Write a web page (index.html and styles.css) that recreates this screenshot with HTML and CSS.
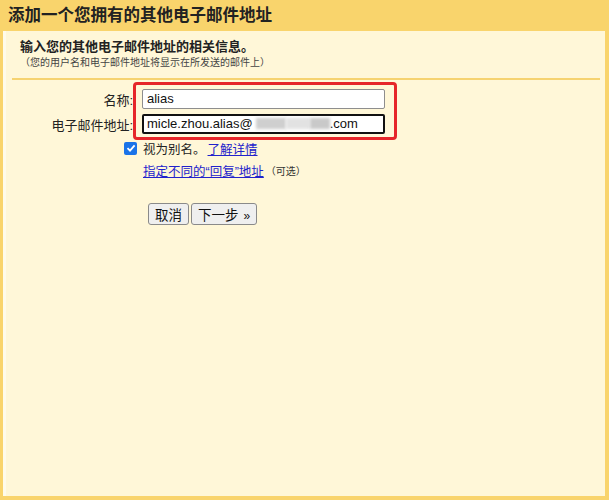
FILE: index.html
```html
<!DOCTYPE html>
<html lang="zh-CN">
<head>
<meta charset="utf-8">
<title>添加一个您拥有的其他电子邮件地址</title>
<link rel="stylesheet" href="styles.css">
</head>
<body>
<div class="header">添加一个您拥有的其他电子邮件地址</div>
<div class="panel">
  <div class="intro">
    <div class="intro-title">输入您的其他电子邮件地址的相关信息。</div>
    <div class="intro-note">（您的用户名和电子邮件地址将显示在所发送的邮件上）</div>
  </div>
  <div class="form">
    <div class="highlight"></div>
    <label class="label">名称:</label>
    <div class="field">alias</div>
    <label class="label">电子邮件地址:</label>
    <div class="field focused">micle.zhou.alias@<span class="blur b1"></span><span class="blur b2"></span><span class="blur b3"></span>.com</div>
    <div></div>
    <div class="options">
      <div class="check-row">
        <span class="checkbox"><svg width="12" height="12" viewBox="0 0 12 12"><path d="M2.5 6.2 L5 8.6 L9.6 3.4" fill="none" stroke="#fff" stroke-width="1.8"/></svg></span>
        <span>视为别名。</span><a class="link" href="#">了解详情</a>
      </div>
      <div class="reply-row"><a class="link" href="#">指定不同的“回复”地址</a><span class="optional">（可选）</span></div>
    </div>
  </div>
  <div class="buttons">
    <button class="btn">取消</button>
    <button class="btn">下一步<span class="raquo">»</span></button>
  </div>
</div>
</body>
</html>
```
FILE: styles.css
```css
* { box-sizing: border-box; }
html, body { margin: 0; padding: 0; }
body {
  background: #f9d46c;
  font-family: "Liberation Sans", Arial, "Noto Sans CJK SC", sans-serif;
  color: #222;
  width: 609px;
  height: 500px;
  overflow: hidden;
}
.header {
  height: 31px;
  padding-left: 8px;
  font-size: 16.5px;
  font-weight: bold;
  line-height: 31px;
  color: #222;
}
.panel {
  margin: 0 4px 0 3px;
  height: 465px;
  background: #fff7d8;
  border-left: 3px solid #fffbea;
  padding: 0 5px 0 6px;
}
.intro {
  padding: 7px 8px 8px 8px;
  border-bottom: 2px solid #f6d370;
}
.intro-title {
  font-size: 13px;
  font-weight: bold;
  line-height: 18px;
}
.intro-note {
  font-size: 10px;
  line-height: 14px;
  color: #444;
}
.form {
  position: relative;
  display: grid;
  grid-template-columns: 121px 243px;
  column-gap: 9px;
  row-gap: 5px;
  padding-top: 9px;
  align-items: center;
}
.label {
  text-align: right;
  font-size: 13px;
  color: #222;
}
.field {
  height: 20px;
  border: 1px solid #8e8e8e;
  border-radius: 2px;
  background: #fff;
  font-size: 13px;
  line-height: 18px;
  padding: 0 4px;
  color: #111;
  white-space: nowrap;
}
.field.focused {
  border: 2px solid #111;
  line-height: 16px;
  padding: 0 3px;
}
.blur {
  display: inline-block;
  height: 11px;
  vertical-align: -1px;
  background: #d4d4d4;
  filter: blur(1.5px);
}
.b1 { width: 30px; background: #cfcfcf; margin-left: 3px; }
.b2 { width: 24px; background: #e2e2e2; }
.b3 { width: 20px; background: #c9c9c9; }
.highlight {
  position: absolute;
  left: 121px;
  top: 2px;
  width: 264px;
  height: 58px;
  border: 3px solid #e6262a;
  border-radius: 4px;
}
.options {
  margin-left: -18px;
  font-size: 12.5px;
}
.check-row {
  display: flex;
  align-items: center;
  height: 16px;
  margin-top: 1px;
}
.checkbox {
  width: 13px;
  height: 13px;
  border-radius: 2px;
  background: #1a73e8;
  display: inline-flex;
  align-items: center;
  justify-content: center;
  margin-right: 6px;
}
.link {
  color: #2222cc;
  text-decoration: underline;
  margin-left: 2px;
}
.reply-row {
  margin-left: 19px;
  margin-top: 6px;
  height: 16px;
  display: flex;
  align-items: center;
}
.reply-row .link { margin-left: 0; }
.optional {
  font-size: 10px;
  color: #333;
  margin-left: 2px;
}
.buttons {
  display: flex;
  gap: 2px;
  margin-left: 136px;
  margin-top: 25px;
}
.btn {
  height: 22px;
  padding: 0 6px;
  font-family: "Liberation Sans", Arial, "Noto Sans CJK SC", sans-serif;
  font-size: 13.5px;
  color: #111;
  background: #efefef;
  border: 1px solid #8a8a8a;
  border-radius: 3px;
}
.raquo { font-size: 12px; margin-left: 5px; }
```
